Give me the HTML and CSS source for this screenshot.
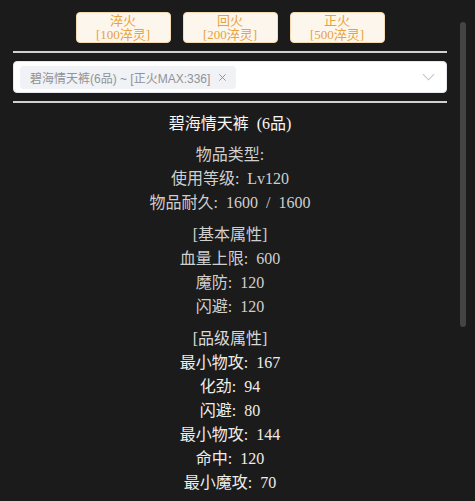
FILE: index.html
```html
<!DOCTYPE html>
<html lang="zh-CN">
<head>
<meta charset="utf-8">
<title>装备详情</title>
<link rel="stylesheet" href="styles.css">
</head>
<body>
<div class="panel">
  <div class="actions">
    <button class="btn"><span>淬火</span><span>[100淬灵]</span></button>
    <button class="btn"><span>回火</span><span>[200淬灵]</span></button>
    <button class="btn"><span>正火</span><span>[500淬灵]</span></button>
  </div>
  <div class="rule"></div>
  <div class="select">
    <span class="tag">碧海情天裤(6品) ~ [正火MAX:336]
      <svg class="tag-close" viewBox="0 0 10 10" width="9" height="9"><path d="M1.5 1.5 L8.5 8.5 M8.5 1.5 L1.5 8.5" stroke="#909399" stroke-width="1.1" fill="none"/></svg>
    </span>
    <svg class="chevron" viewBox="0 0 14 8" width="13" height="8"><path d="M1 1 L7 7 L13 1" stroke="#c0c4cc" stroke-width="1.2" fill="none"/></svg>
  </div>
  <div class="rule"></div>
  <div class="detail">
    <div class="title">碧海情天裤 (6品)</div>
    <div class="group info">
      <div>物品类型:</div>
      <div>使用等级: Lv120</div>
      <div>物品耐久: 1600 / 1600</div>
    </div>
    <div class="group info">
      <div>[基本属性]</div>
      <div>血量上限: 600</div>
      <div>魔防: 120</div>
      <div>闪避: 120</div>
    </div>
    <div class="group grade">
      <div class="head">[品级属性]</div>
      <div>最小物攻: 167</div>
      <div>化劲: 94</div>
      <div>闪避: 80</div>
      <div>最小物攻: 144</div>
      <div>命中: 120</div>
      <div>最小魔攻: 70</div>
    </div>
  </div>
</div>
<div class="scroll-thumb"></div>
</body>
</html>
```
FILE: styles.css
```css
html, body {
  margin: 0;
  padding: 0;
  height: 100%;
  overflow: hidden;
  background: #1b1b1b;
}
body {
  font-family: "Liberation Serif", "Noto Sans CJK SC", serif;
}
.panel {
  width: 434px;
  margin-left: 13px;
  padding-top: 12px;
}
.actions {
  display: flex;
  justify-content: center;
  gap: 12px;
}
.btn {
  width: 95px;
  height: 31px;
  box-sizing: border-box;
  background: #fdf6ec;
  border: 1px solid #f5dab1;
  border-radius: 4px;
  color: #e6a23c;
  font-family: "Liberation Serif", "Noto Sans CJK SC", serif;
  font-size: 13px;
  line-height: 14px;
  padding: 0;
  display: flex;
  flex-direction: column;
  align-items: center;
  justify-content: center;
}
.rule {
  height: 2px;
  background: #d0d0d0;
  margin-top: 8px;
}
.select {
  margin-top: 8px;
  height: 32px;
  box-sizing: border-box;
  background: #fff;
  border: 1px solid #e4e7ed;
  border-radius: 4px;
  display: flex;
  align-items: center;
  padding: 0 10px 0 6px;
}
.tag {
  display: inline-flex;
  align-items: center;
  gap: 8px;
  height: 23px;
  padding: 0 9px 0 10px;
  background: #f0f2f5;
  border-radius: 4px;
  color: #909399;
  font-family: "Liberation Sans", "Noto Sans CJK SC", sans-serif;
  font-size: 12px;
  white-space: nowrap;
}
.tag-close {
  display: block;
}
.chevron {
  margin-left: auto;
  margin-right: 1px;
  display: block;
}
.detail {
  padding-top: 9px;
  text-align: center;
  font-size: 16px;
  line-height: 24px;
  word-spacing: 4px;
}
.title {
  color: #f7f7f7;
  margin-bottom: 7px;
}
.group + .group {
  margin-top: 8px;
}
.info {
  color: #cfcfcf;
}
.grade {
  color: #ededed;
}
.grade .head {
  color: #d8d8d8;
}
.scroll-thumb {
  position: absolute;
  left: 460px;
  top: 22px;
  width: 6px;
  height: 305px;
  border-radius: 3px;
  background: #444;
}
```
